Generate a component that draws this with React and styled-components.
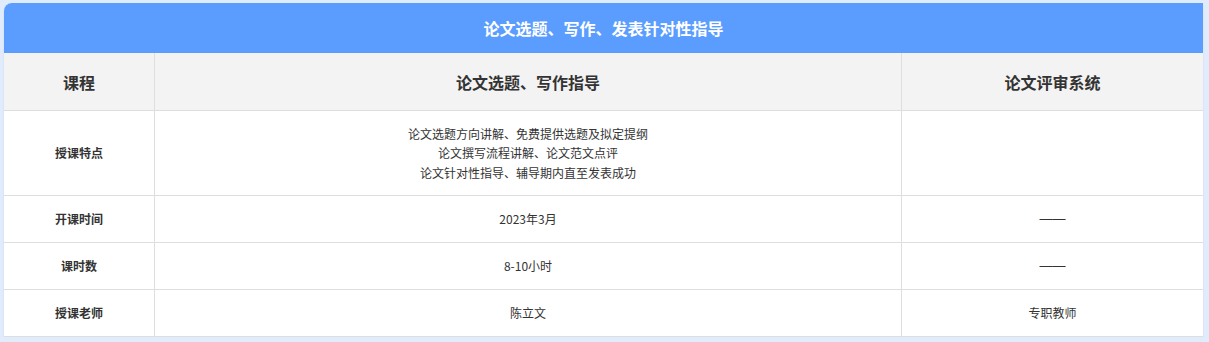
import React from "react";
import styled, { createGlobalStyle } from "styled-components";

const Global = createGlobalStyle`
  html, body { margin: 0; padding: 0; }
  body {
    background: #e0ebfc;
    font-family: "Noto Sans CJK SC", "Noto Sans", sans-serif;
    color: #333;
  }
`;

const Page = styled.div`
  padding: 3px 6px 0 4px;
`;

const Card = styled.div`
  width: 1199px;
  background: #fff;
  border-top-left-radius: 8px;
  overflow: hidden;
  box-shadow: 0 1px 2px rgba(0, 0, 0, 0.08);
`;

const Title = styled.div`
  height: 50px;
  background: #5b9dff;
  color: #fff;
  font-size: 16px;
  font-weight: 700;
  display: flex;
  align-items: center;
  justify-content: center;
`;

const Grid = styled.div`
  display: grid;
  grid-template-columns: 151px 747px 301px;
`;

const Cell = styled.div`
  box-sizing: border-box;
  height: ${(p) => p.$h}px;
  border-bottom: 1px solid #dedede;
  border-right: ${(p) => (p.$last ? "none" : "1px solid #dedede")};
  background: ${(p) => (p.$head ? "#f3f3f3" : "#fff")};
  display: flex;
  flex-direction: column;
  align-items: center;
  justify-content: center;
  text-align: center;
  font-size: ${(p) => (p.$head ? 16 : 12)}px;
  font-weight: ${(p) => (p.$head || p.$label ? 700 : 400)};
  line-height: ${(p) => (p.$head ? "22px" : "19.5px")};
  color: #333;
`;

const Dash = styled.span`
  font-family: "Liberation Sans", sans-serif;
  font-size: 13px;
  color: #333;
`;

const rows = [
  {
    label: "授课特点",
    h: 85,
    mid: [
      "论文选题方向讲解、免费提供选题及拟定提纲",
      "论文撰写流程讲解、论文范文点评",
      "论文针对性指导、辅导期内直至发表成功",
    ],
    right: "",
  },
  { label: "开课时间", h: 47, mid: ["2023年3月"], right: "dash" },
  { label: "课时数", h: 47, mid: ["8-10小时"], right: "dash" },
  { label: "授课老师", h: 47, mid: ["陈立文"], right: "专职教师" },
];

export default function App() {
  return (
    <>
      <Global />
      <Page>
        <Card>
          <Title>论文选题、写作、发表针对性指导</Title>
          <Grid>
            <Cell $head $h={58}>课程</Cell>
            <Cell $head $h={58}>论文选题、写作指导</Cell>
            <Cell $head $h={58} $last>论文评审系统</Cell>
            {rows.map((r) => (
              <React.Fragment key={r.label}>
                <Cell $label $h={r.h}>{r.label}</Cell>
                <Cell $h={r.h}>
                  {r.mid.map((m) => (
                    <div key={m}>{m}</div>
                  ))}
                </Cell>
                <Cell $h={r.h} $last>
                  {r.right === "dash" ? <Dash>——</Dash> : r.right}
                </Cell>
              </React.Fragment>
            ))}
          </Grid>
        </Card>
      </Page>
    </>
  );
}
